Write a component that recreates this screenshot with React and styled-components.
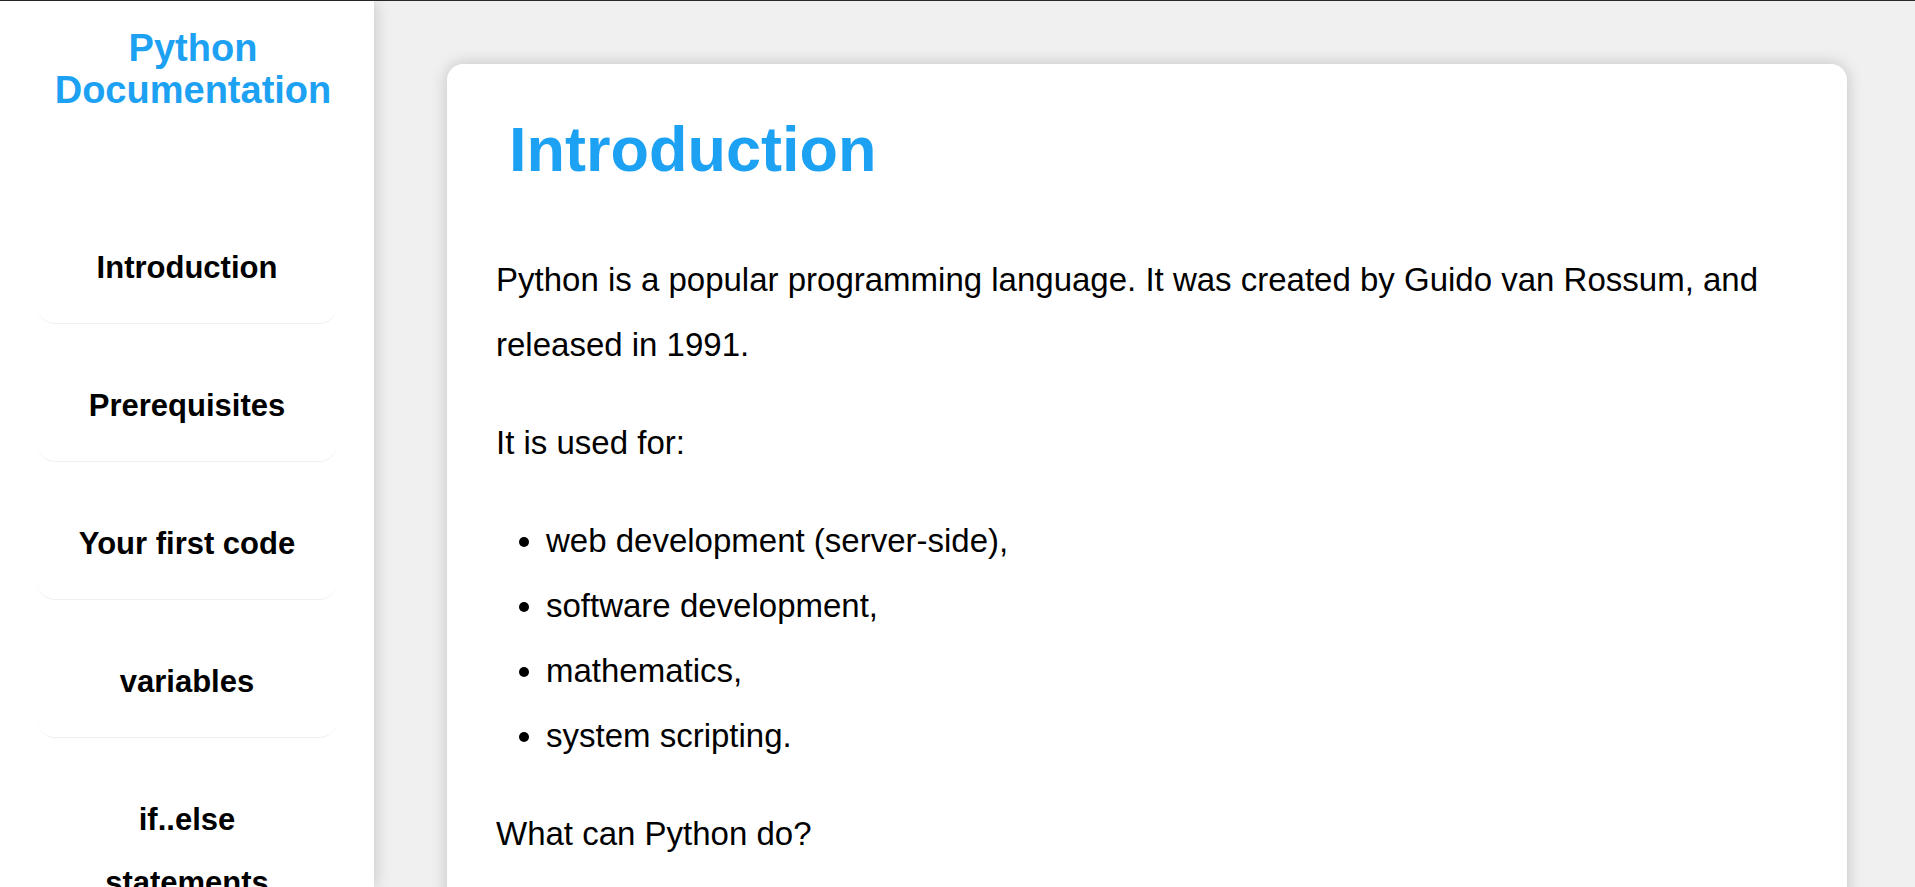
import React from "react";
import styled, { createGlobalStyle } from "styled-components";

const GlobalStyle = createGlobalStyle`
  *, *::before, *::after {
    box-sizing: border-box;
  }
  body {
    margin: 0;
    background: #f0f0f0;
    color: #000;
    font-family: "Liberation Sans", Arial, Helvetica, sans-serif;
  }
`;

const Page = styled.div`
  display: flex;
  height: 100vh;
  border-top: 1px solid #2b262a;
`;

const Sidebar = styled.nav`
  flex: 0 0 374px;
  position: relative;
  z-index: 1;
  overflow-y: auto;
  scrollbar-width: none;
  background: #fff;
  box-shadow: 0 0 16px rgba(0, 0, 0, 0.2);
`;

const SiteTitle = styled.h2`
  margin: 0;
  padding: 26px 0 0 12px;
  color: #1da1f2;
  font-size: 38px;
  line-height: 42px;
  text-align: center;
`;

const NavList = styled.ul`
  margin: 0;
  padding: 101px 37px 0;
  list-style: none;
`;

const NavItem = styled.li`
  margin-bottom: 26px;
  padding: 24px;
  border-bottom: 1px solid #f0f0f0;
  border-radius: 18px;
`;

const NavLink = styled.a`
  display: block;
  color: inherit;
  font-size: 31px;
  font-weight: bold;
  line-height: 63px;
  text-align: center;
  text-decoration: none;
`;

const Main = styled.main`
  flex: 1;
  min-width: 0;
  padding: 63px 68px 63px 73px;
  overflow-y: auto;
  scrollbar-width: none;
`;

const Card = styled.section`
  padding: 49px;
  border-radius: 16px;
  background: #fff;
  box-shadow: 0 0 16px rgba(0, 0, 0, 0.2);
`;

const Heading = styled.h1`
  margin: 0 0 62px;
  padding-left: 13px;
  color: #1da1f2;
  font-size: 63px;
  line-height: 72px;
`;

const Paragraph = styled.p`
  margin: 0 0 33px;
  font-size: 33px;
  line-height: 65px;
`;

const BulletList = styled.ul`
  margin: 0 0 33px;
  padding-left: 50px;
  font-size: 33px;
  line-height: 65px;
`;

const links = [
  ["Introduction", "#introduction"],
  ["Prerequisites", "#prerequisites"],
  ["Your first code", "#first-code"],
  ["variables", "#variables"],
  ["if..else statements", "#if-else"],
];

const uses = [
  "web development (server-side),",
  "software development,",
  "mathematics,",
  "system scripting.",
];

export default function App() {
  return (
    <>
      <GlobalStyle />
      <Page>
        <Sidebar aria-label="Documentation">
          <SiteTitle>Python Documentation</SiteTitle>
          <NavList>
            {links.map(([label, href]) => (
              <NavItem key={href}>
                <NavLink href={href}>{label}</NavLink>
              </NavItem>
            ))}
          </NavList>
        </Sidebar>
        <Main>
          <Card id="introduction">
            <Heading>Introduction</Heading>
            <Paragraph>
              Python is a popular programming language. It was created by Guido
              van Rossum, and released in 1991.
            </Paragraph>
            <Paragraph>It is used for:</Paragraph>
            <BulletList>
              {uses.map((use) => (
                <li key={use}>{use}</li>
              ))}
            </BulletList>
            <Paragraph>What can Python do?</Paragraph>
          </Card>
        </Main>
      </Page>
    </>
  );
}
